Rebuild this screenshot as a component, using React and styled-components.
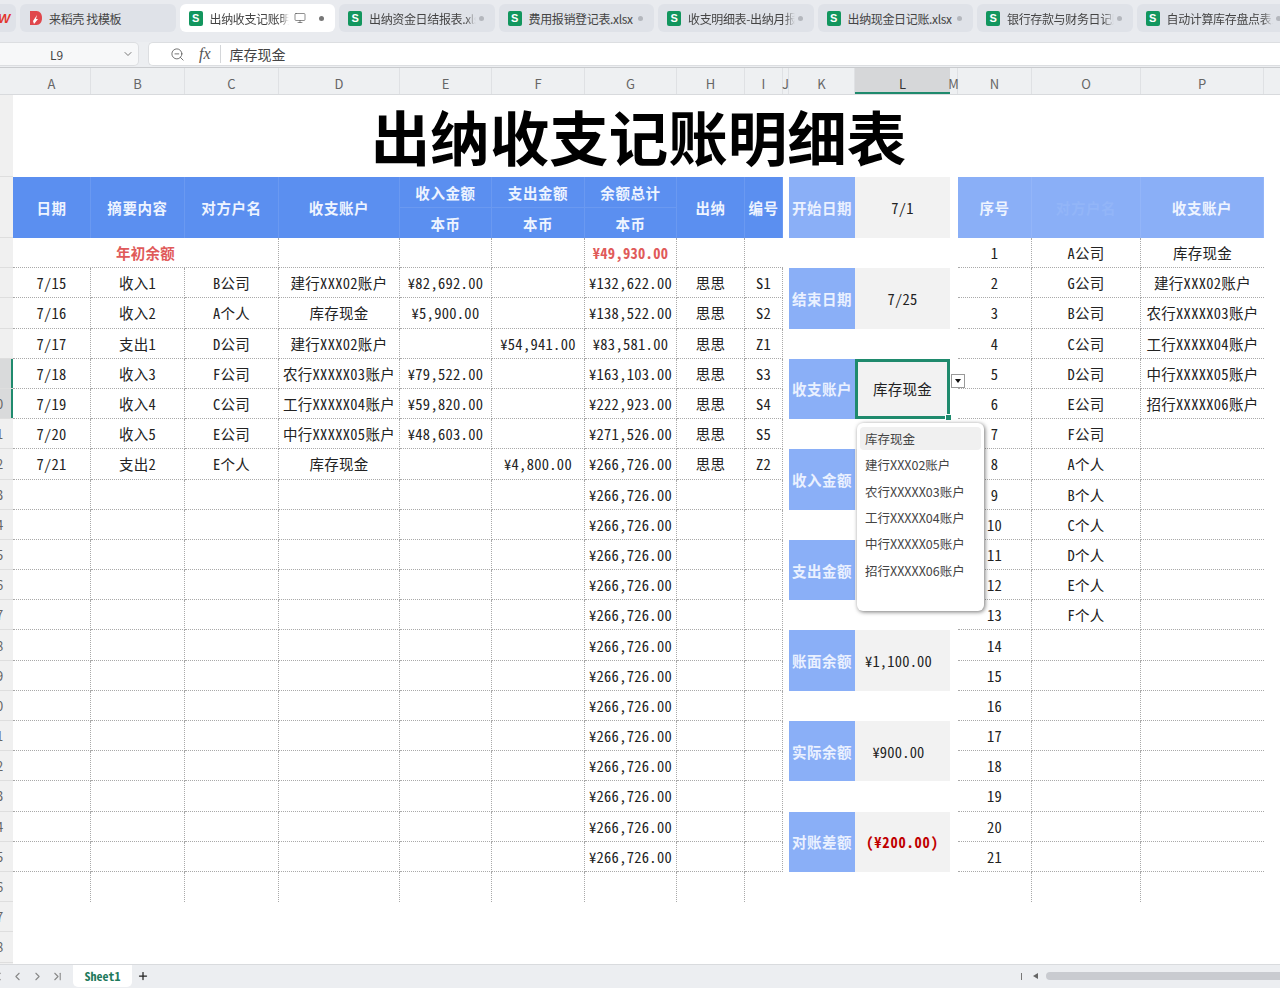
import React from "react";
import styled, { createGlobalStyle } from "styled-components";
import {
  ChevronDown,
  ChevronFirst,
  ChevronLast,
  ChevronLeft,
  ChevronRight,
  Monitor,
  Plus,
  ZoomOut
} from "lucide-react";

const GREEN = "#1f8a6d";
const BLUE = "#5b8ff0";
const SOFT_BLUE = "#8aaff7";
const DOT = "#a9a9a9";
const COLS = "78px 94px 94px 121px 92px 93px 92px 68px 38px 6px 66px 95px 8px 74px 109px 123px 16px";

const GlobalStyle = createGlobalStyle`
  html, body { margin: 0; padding: 0; background: #fff; }
  body { font-family: "Noto Sans CJK SC", "Liberation Sans", sans-serif; }
`;

const Page = styled.div`
  width: 1280px;
  height: 988px;
  display: flex;
  flex-direction: column;
  overflow: hidden;
  background: #fff;
`;

const TabBar = styled.div`
  height: 42px;
  flex: none;
  display: flex;
  gap: 4px;
  padding-top: 4px;
  box-sizing: border-box;
  background: #e9ebef;
`;

const Tab = styled.div`
  width: 155.5px;
  height: 28px;
  flex: none;
  display: flex;
  align-items: center;
  padding: 0 11px 0 9px;
  box-sizing: border-box;
  border-radius: 6px;
  background: ${p => (p.$active ? "#fff" : "#dfe2e8")};
  color: #444;
  font-size: 12px;
  letter-spacing: -0.35px;
`;

const LogoTab = styled(Tab)`
  width: 16px;
  padding: 0 6px 0 0;
  overflow: hidden;
  justify-content: flex-end;
  border-radius: 0 6px 6px 0;
  color: #e2382f;
  font: italic 700 13px "Liberation Sans", sans-serif;
`;

const TabIcon = styled.span`
  width: 14px;
  height: 15px;
  flex: none;
  margin-right: 7px;
  display: flex;
  align-items: center;
  justify-content: center;
  border-radius: 2px;
  background: #12965e;
  color: #fff;
  font: 700 11px "Liberation Sans", sans-serif;
`;

const TabLabel = styled.span`
  flex: 1;
  min-width: 0;
  white-space: nowrap;
  overflow: hidden;
  ${p => p.$fade && "mask-image: linear-gradient(to right, #000 90%, transparent);"}
`;

const TabDot = styled.span`
  width: 5px;
  height: 5px;
  flex: none;
  margin-left: 3px;
  border-radius: 50%;
  background: ${p => (p.$active ? "#777" : "#b4b7bd")};
`;

const FormulaBar = styled.div`
  height: 26px;
  flex: none;
  display: flex;
  gap: 9px;
  padding-bottom: 1px;
  box-sizing: border-box;
  background: #eceef1;
  border-bottom: 1px solid #c9cbce;
`;

const NameBox = styled.div`
  width: 139px;
  flex: none;
  display: flex;
  align-items: center;
  justify-content: space-between;
  padding: 0 4px 0 50px;
  box-sizing: border-box;
  background: #f7f8f9;
  border-radius: 0 5px 5px 0;
  border: 1px solid #dcdee1;
  border-left: none;
  color: #444;
  font-size: 12px;
`;

const FormulaBox = styled.div`
  flex: 1;
  display: flex;
  align-items: center;
  padding-left: 21px;
  background: #fff;
  border-radius: 5px 0 0 5px;
  border: 1px solid #dcdee1;
  border-right: none;
  color: #444;
  font-size: 14px;
`;

const FxLabel = styled.span`
  margin: 0 9px 0 14px;
  padding-right: 9px;
  border-right: 1px solid #d4d6d9;
  font: italic 16px "Liberation Serif", serif;
  color: #555;
`;

const HeaderRow = styled.div`
  height: 27px;
  flex: none;
  display: flex;
  background: #eef0f2;
  border-bottom: 1px solid #d8dadd;
  box-sizing: border-box;
`;

const Corner = styled.div`
  width: 13px;
  flex: none;
`;

const ColGrid = styled.div`
  flex: 1;
  display: grid;
  grid-template-columns: ${COLS};
`;

const ColLabel = styled.div`
  display: flex;
  align-items: center;
  justify-content: center;
  white-space: nowrap;
  min-width: 0;
  padding-top: 5px;
  box-sizing: border-box;
  font-size: 13px;
  color: ${p => (p.$selected ? "#333" : "#666")};
  background: ${p => (p.$selected ? "#d6d7d9" : "transparent")};
  border-right: ${p => (p.$selected ? "none" : "1px solid #dfe1e4")};
  box-shadow: ${p => (p.$selected ? `inset 0 -2px 0 ${GREEN}` : "none")};
`;

const Body = styled.div`
  flex: 1;
  min-height: 0;
  display: flex;
  overflow: hidden;
`;

const RowHead = styled.div`
  width: 34px;
  flex: none;
  margin-left: -21px;
  overflow: hidden;
  background: #f0f0f0;
`;

const RowLabel = styled.div`
  height: ${p => p.$height}px;
  box-sizing: border-box;
  display: flex;
  align-items: center;
  justify-content: center;
  font-size: 13px;
  color: #666;
  background: ${p => (p.$selected ? "#d9dadb" : "transparent")};
  border-bottom: 1px solid #dedede;
  box-shadow: ${p => (p.$selected ? `inset -2px 0 0 ${GREEN}` : "none")};
`;

const Sheet = styled.div`
  flex: 1;
  display: grid;
  grid-template-columns: ${COLS};
  grid-template-rows: 82px 31px 30px repeat(22, 30.2px);
  align-content: start;
  background: #fff;
  color: #222;
  font-size: 14.5px;
  font-feature-settings: "hwid";
`;

const Cell = styled.div`
  grid-column: ${p => p.$col};
  grid-row: ${p => p.$row};
  min-width: 0;
  display: flex;
  align-items: center;
  justify-content: center;
  white-space: nowrap;
  box-sizing: border-box;
`;

const Title = styled(Cell)`
  font-size: 59.5px;
  font-weight: 700;
  color: #000;
  padding-bottom: 3px;
`;

const HeadCell = styled(Cell)`
  background: ${p => (p.$soft ? SOFT_BLUE : BLUE)};
  color: ${p => p.$text || "#eef4ff"};
  font-weight: 700;
  letter-spacing: 0.6px;
  border-right: 1px solid ${p => (p.$soft ? "#93b5f8" : "#6a99f1")};
  border-bottom: ${p => (p.$split ? "1px solid #6a99f1" : "none")};
`;

const DataCell = styled(Cell)`
  letter-spacing: 0.3px;
  border-right: ${p => (p.$open ? "none" : `1px dotted ${DOT}`)};
  border-bottom: ${p => (p.$last ? "none" : `1px dotted ${DOT}`)};
  color: ${p => p.$color || "inherit"};
  font-weight: ${p => (p.$bold ? 700 : 400)};
`;

const PanelLabel = styled(Cell)`
  background: ${SOFT_BLUE};
  color: #eaf1ff;
  font-weight: 700;
  font-size: 14.5px;
  letter-spacing: 0.5px;
`;

const PanelValue = styled(Cell)`
  background: #f2f2f2;
  color: ${p => p.$color || "#222"};
  font-weight: ${p => (p.$bold ? 700 : 400)};
  letter-spacing: ${p => (p.$bold ? 0.8 : 0.2)}px;
  padding-right: ${p => p.$shift || 0}px;
`;

const SelectedCell = styled(PanelValue)`
  position: relative;
  border: 3px solid ${GREEN};
`;

const Handle = styled.span`
  position: absolute;
  right: -5px;
  bottom: -5px;
  width: 5px;
  height: 5px;
  background: ${GREEN};
  border: 1px solid #fff;
`;

const DropButton = styled.span`
  position: absolute;
  left: 93px;
  top: 12px;
  width: 12px;
  height: 12px;
  display: flex;
  align-items: center;
  justify-content: center;
  background: #fff;
  border: 1px solid #999;
  &::after {
    content: "";
    border: 3.5px solid transparent;
    border-top: 4px solid #111;
    border-bottom: none;
  }
`;

const Menu = styled.div`
  position: absolute;
  left: -1px;
  top: 61px;
  width: 127px;
  height: 188px;
  padding: 4px 3px;
  box-sizing: border-box;
  z-index: 3;
  background: #fff;
  border-radius: 6px;
  box-shadow: 1px 1px 4px rgba(0, 0, 0, 0.55);
  color: #444;
  font-size: 12.5px;
  font-weight: 400;
  letter-spacing: 0;
  font-feature-settings: normal;
`;

const MenuItem = styled.div`
  height: 23px;
  margin-bottom: 3.4px;
  display: flex;
  align-items: center;
  padding-left: 5px;
  border-radius: 4px;
  background: ${p => (p.$active ? "#f0f0f0" : "transparent")};
`;

const BottomBar = styled.div`
  height: 24px;
  flex: none;
  display: flex;
  align-items: flex-start;
  box-sizing: border-box;
  background: #eceef1;
  border-top: 1px solid #d9dbde;
  color: #888;
`;

const NavGroup = styled.div`
  width: 73px;
  height: 22px;
  flex: none;
  display: flex;
  align-items: center;
  gap: 7px;
  margin-left: -9px;
`;

const SheetTab = styled.div`
  width: 59px;
  height: 22px;
  flex: none;
  margin-left: 9px;
  padding-bottom: 2px;
  box-sizing: border-box;
  display: flex;
  align-items: center;
  justify-content: center;
  background: #fff;
  border-radius: 0 0 5px 5px;
  color: #1f7a5c;
  font-size: 12px;
  font-weight: 700;
  font-feature-settings: "hwid";
`;

const AddSheet = styled.div`
  width: 22px;
  height: 22px;
  display: flex;
  align-items: center;
  justify-content: center;
  color: #222;
`;

const ScrollZone = styled.div`
  flex: 1;
  height: 22px;
  display: flex;
  align-items: center;
  justify-content: flex-end;
`;

const ScrollTick = styled.span`
  width: 1px;
  height: 7px;
  margin-right: 11px;
  background: #777;
`;

const ScrollArrow = styled.span`
  margin-right: 8px;
  border: 3.5px solid transparent;
  border-right: 5px solid #666;
  border-left: none;
`;

const ScrollThumb = styled.span`
  width: 234px;
  height: 8px;
  border-radius: 4px 0 0 4px;
  background: #c9cbd0;
`;

const LETTERS = "ABCDEFGHIJKLMNOP".split("");

const TABS = [
  { name: "出纳资金日结报表.xlsx", fade: true },
  { name: "费用报销登记表.xlsx" },
  { name: "收支明细表-出纳月报表.xlsx", fade: true },
  { name: "出纳现金日记账.xlsx" },
  { name: "银行存款与财务日记账.xlsx", fade: true },
  { name: "自动计算库存盘点表1.xlsx", fade: true }
];

const ROWS = [
  ["7/15", "收入1", "B公司", "建行XXX02账户", "¥82,692.00", "", "¥132,622.00", "思思", "S1"],
  ["7/16", "收入2", "A个人", "库存现金", "¥5,900.00", "", "¥138,522.00", "思思", "S2"],
  ["7/17", "支出1", "D公司", "建行XXX02账户", "", "¥54,941.00", "¥83,581.00", "思思", "Z1"],
  ["7/18", "收入3", "F公司", "农行XXXXX03账户", "¥79,522.00", "", "¥163,103.00", "思思", "S3"],
  ["7/19", "收入4", "C公司", "工行XXXXX04账户", "¥59,820.00", "", "¥222,923.00", "思思", "S4"],
  ["7/20", "收入5", "E公司", "中行XXXXX05账户", "¥48,603.00", "", "¥271,526.00", "思思", "S5"],
  ["7/21", "支出2", "E个人", "库存现金", "", "¥4,800.00", "¥266,726.00", "思思", "Z2"]
];

const COMPANIES = ["A公司", "G公司", "B公司", "C公司", "D公司", "E公司", "F公司", "A个人", "B个人", "C个人", "D个人", "E个人", "F个人"];
const ACCOUNTS = ["库存现金", "建行XXX02账户", "农行XXXXX03账户", "工行XXXXX04账户", "中行XXXXX05账户", "招行XXXXX06账户"];

const HEADS = [
  [1, "日期"],
  [2, "摘要内容"],
  [3, "对方户名"],
  [4, "收支账户"]
];

const PANELS = [
  { row: 2, label: "开始日期", value: "7/1" },
  { row: 5, label: "结束日期", value: "7/25" },
  { row: 8, label: "收支账户", selected: true },
  { row: 11, label: "收入金额" },
  { row: 14, label: "支出金额" },
  { row: 17, label: "账面余额", value: "¥1,100.00", shift: 8 },
  { row: 20, label: "实际余额", value: "¥900.00", shift: 8 },
  { row: 23, label: "对账差额", value: "(¥200.00)", color: "#c00000", bold: true }
];

// 4 is the first body row of the grid, 21 rows of data plus an open row below
const bodyRows = Array.from({ length: 22 }, (_, i) => i + 4);

const rowCells = rowIndex => {
  const data = rowIndex < 7 ? ROWS[rowIndex] : ["", "", "", "", "", "", "¥266,726.00", "", ""];
  return data.map((text, i) => (
    <DataCell key={`${rowIndex}-${i}`} $col={i + 1} $row={rowIndex + 5}>
      {text}
    </DataCell>
  ));
};

const App = () => (
  <Page>
    <GlobalStyle />
    <TabBar>
      <LogoTab>W</LogoTab>
      <Tab>
        <svg width="14" height="16" viewBox="0 0 14 16" style={{ marginRight: 6, flex: "none" }}>
          <path d="M1 1h6.5C11 1 13 4 13 8s-2 7-5.5 7H1z" fill="#e0474c" />
          <path d="M4 11l4-6-1 4h2l-4 5z" fill="#fff" />
        </svg>
        <TabLabel>来稻壳 找模板</TabLabel>
      </Tab>
      <Tab $active>
        <TabIcon>S</TabIcon>
        <TabLabel $fade>出纳收支记账明细表.xlsx</TabLabel>
        <Monitor size={12} strokeWidth={1.2} style={{ marginLeft: 5, flex: "none" }} />
        <TabDot $active style={{ marginLeft: 13 }} />
      </Tab>
      {TABS.map(tab => (
        <Tab key={tab.name}>
          <TabIcon>S</TabIcon>
          <TabLabel $fade={tab.fade}>{tab.name}</TabLabel>
          <TabDot />
        </Tab>
      ))}
    </TabBar>

    <FormulaBar>
      <NameBox>
        L9
        <ChevronDown size={12} color="#777" />
      </NameBox>
      <FormulaBox>
        <ZoomOut size={15} strokeWidth={1.3} color="#555" />
        <FxLabel>fx</FxLabel>
        库存现金
      </FormulaBox>
    </FormulaBar>

    <HeaderRow>
      <Corner />
      <ColGrid>
        {LETTERS.map(letter => (
          <ColLabel key={letter} $selected={letter === "L"}>
            {letter}
          </ColLabel>
        ))}
      </ColGrid>
    </HeaderRow>

    <Body>
      <RowHead>
        <RowLabel $height={82} />
        <RowLabel $height={61} />
        {Array.from({ length: 26 }, (_, i) => i + 5).map(n => (
          <RowLabel key={n} $height={30.2} $selected={n === 9 || n === 10}>
            {n}
          </RowLabel>
        ))}
      </RowHead>

      <Sheet>
        <Title $col="1 / 17" $row={1}>出纳收支记账明细表</Title>

        {HEADS.map(([col, text]) => (
          <HeadCell key={col} $col={col} $row="2 / 4">{text}</HeadCell>
        ))}
        <HeadCell $col={5} $row={2} $split>收入金额</HeadCell>
        <HeadCell $col={6} $row={2} $split>支出金额</HeadCell>
        <HeadCell $col={7} $row={2} $split>余额总计</HeadCell>
        <HeadCell $col={5} $row={3}>本币</HeadCell>
        <HeadCell $col={6} $row={3}>本币</HeadCell>
        <HeadCell $col={7} $row={3}>本币</HeadCell>
        <HeadCell $col={8} $row="2 / 4">出纳</HeadCell>
        <HeadCell $col={9} $row="2 / 4">编号</HeadCell>

        <DataCell $col="1 / 4" $row={4} $color="#e05a5a" $bold>年初余额</DataCell>
        <DataCell $col={4} $row={4} />
        <DataCell $col={5} $row={4} />
        <DataCell $col={6} $row={4} />
        <DataCell $col={7} $row={4} $color="#e05a5a" $bold>¥49,930.00</DataCell>
        <DataCell $col={8} $row={4} />
        <DataCell $col={9} $row={4} $open />

        {Array.from({ length: 20 }, (_, i) => rowCells(i))}

        {[1, 2, 3, 4, 5, 6, 7, 8].map(col => (
          <DataCell key={col} $col={col} $row={25} $last />
        ))}

        {PANELS.map(panel => (
          <React.Fragment key={panel.row}>
            <PanelLabel $col={11} $row={`${panel.row} / ${panel.row + 2}`}>{panel.label}</PanelLabel>
            {panel.selected ? (
              <SelectedCell $col={12} $row={`${panel.row} / ${panel.row + 2}`}>
                库存现金
                <Handle />
                <DropButton />
                <Menu>
                  {ACCOUNTS.map((account, i) => (
                    <MenuItem key={account} $active={i === 0}>{account}</MenuItem>
                  ))}
                </Menu>
              </SelectedCell>
            ) : (
              <PanelValue
                $col={12}
                $row={`${panel.row} / ${panel.row + 2}`}
                $color={panel.color}
                $bold={panel.bold}
                $shift={panel.shift}
              >
                {panel.value}
              </PanelValue>
            )}
          </React.Fragment>
        ))}

        <HeadCell $col={14} $row="2 / 4" $soft>序号</HeadCell>
        <HeadCell $col={15} $row="2 / 4" $soft $text="#92b5f8">对方户名</HeadCell>
        <HeadCell $col={16} $row="2 / 4" $soft>收支账户</HeadCell>

        {bodyRows.map((row, i) => (
          <React.Fragment key={row}>
            <DataCell $col={14} $row={row} $last={i === 21}>{i < 21 ? i + 1 : ""}</DataCell>
            <DataCell $col={15} $row={row} $last={i === 21}>{COMPANIES[i]}</DataCell>
            <DataCell $col={16} $row={row} $last={i === 21} $open>{ACCOUNTS[i]}</DataCell>
          </React.Fragment>
        ))}
      </Sheet>
    </Body>

    <BottomBar>
      <NavGroup>
        <ChevronFirst size={13} />
        <ChevronLeft size={13} />
        <ChevronRight size={13} />
        <ChevronLast size={13} />
      </NavGroup>
      <SheetTab>Sheet1</SheetTab>
      <AddSheet>
        <Plus size={12} strokeWidth={2.5} />
      </AddSheet>
      <ScrollZone>
        <ScrollTick />
        <ScrollArrow />
        <ScrollThumb />
      </ScrollZone>
    </BottomBar>
  </Page>
);

export default App;
